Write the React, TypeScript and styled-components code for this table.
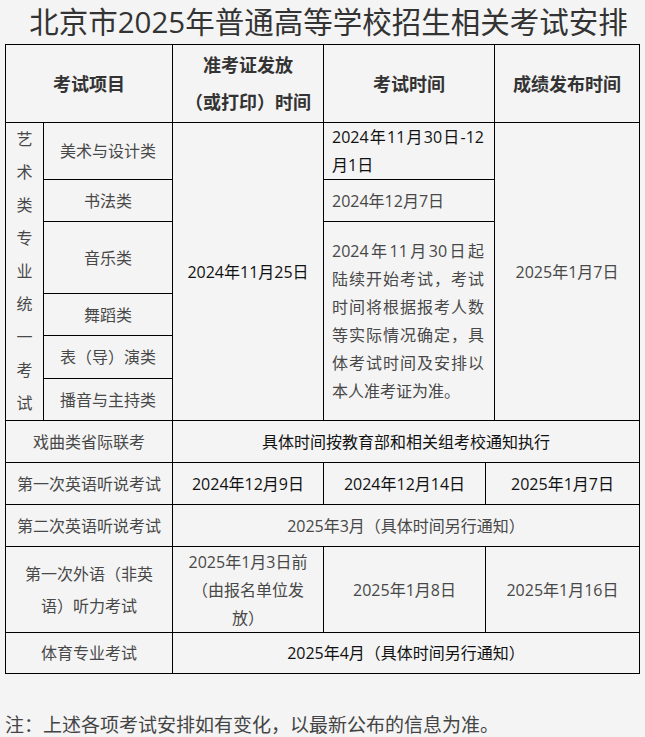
import styled, { createGlobalStyle } from "styled-components";

const GlobalStyle = createGlobalStyle`
  html, body {
    margin: 0;
    padding: 0;
    background: #f4f4f4;
  }
  body {
    font-family: "Open Sans", "Noto Sans CJK SC", sans-serif;
    color: #444;
  }
`;

const Page = styled.div`
  width: 645px;
  padding: 0 5px;
  box-sizing: border-box;
`;

const Title = styled.h1`
  margin: 0;
  height: 44px;
  line-height: 44px;
  font-size: 29.5px;
  font-weight: 400;
  color: #333;
  text-align: center;
  padding-left: 12px;
  white-space: nowrap;
`;

const Grid = styled.div`
  display: grid;
  grid-template-columns: 37px 128px 150px 161px 8px 144px;
  grid-template-rows: 77px 56px 41px 71px 41px 42px 41px 41px 41px 41px 85px 40px;
  gap: 1px;
  width: max-content;
  background: #000;
  border: 1px solid #000;
`;

type Tone = "head" | "dark" | "mid";

const toneColor: Record<Tone, string> = {
  head: "#333",
  dark: "#111",
  mid: "#484848",
};

const Cell = styled.div<{
  $span?: number;
  $rows?: number;
  $tone?: Tone;
  $justify?: boolean;
  $lh?: number;
  $pl?: number;
  $pr?: number;
}>`
  grid-column: span ${(p) => p.$span ?? 1};
  grid-row: span ${(p) => p.$rows ?? 1};
  display: flex;
  flex-direction: column;
  justify-content: center;
  background: #f4f4f4;
  padding: 0 ${(p) => p.$pr ?? 5}px 0 ${(p) => p.$pl ?? 5}px;
  font-size: ${(p) => (p.$tone === "head" ? 18 : 16)}px;
  font-weight: ${(p) => (p.$tone === "head" ? 700 : 400)};
  line-height: ${(p) => p.$lh ?? 28}px;
  color: ${(p) => toneColor[p.$tone ?? "mid"]};
  text-align: ${(p) => (p.$justify ? "justify" : "center")};
  overflow: hidden;
`;

const Note = styled.p`
  margin: 37px 0 0;
  font-size: 19px;
  line-height: 28px;
  color: #444;
  white-space: nowrap;
`;

const artItems = ["书法类", "音乐类", "舞蹈类", "表（导）演类", "播音与主持类"];

export default function App() {
  return (
    <Page>
      <GlobalStyle />
      <Title>北京市2025年普通高等学校招生相关考试安排</Title>
      <Grid>
        <Cell $span={2} $tone="head">考试项目</Cell>
        <Cell $tone="head" $lh={37}>
          准考证发放
          <br />
          （或打印）时间
        </Cell>
        <Cell $span={2} $tone="head">考试时间</Cell>
        <Cell $tone="head">成绩发布时间</Cell>

        <Cell $rows={6} $lh={33}>艺术类专业统一考试</Cell>
        <Cell>美术与设计类</Cell>
        <Cell $rows={6} $tone="dark">2024年11月25日</Cell>
        <Cell $span={2} $tone="dark" $justify $pl={8} $pr={10}>
          2024年11月30日-12月1日
        </Cell>
        <Cell $rows={6}>2025年1月7日</Cell>

        <Cell>{artItems[0]}</Cell>
        <Cell $span={2} $justify $pl={8} $pr={10}>2024年12月7日</Cell>

        <Cell>{artItems[1]}</Cell>
        <Cell $span={2} $rows={4} $justify $pl={8} $pr={10}>
          2024年11月30日起陆续开始考试，考试时间将根据报考人数等实际情况确定，具体考试时间及安排以本人准考证为准。
        </Cell>
        <Cell>{artItems[2]}</Cell>
        <Cell>{artItems[3]}</Cell>
        <Cell>{artItems[4]}</Cell>

        <Cell $span={2}>戏曲类省际联考</Cell>
        <Cell $span={4} $tone="dark">具体时间按教育部和相关组考校通知执行</Cell>

        <Cell $span={2}>第一次英语听说考试</Cell>
        <Cell $tone="dark">2024年12月9日</Cell>
        <Cell $tone="dark">2024年12月14日</Cell>
        <Cell $span={2} $tone="dark">2025年1月7日</Cell>

        <Cell $span={2}>第二次英语听说考试</Cell>
        <Cell $span={4}>2025年3月（具体时间另行通知）</Cell>

        <Cell $span={2} $lh={32} $pl={8} $pr={8}>第一次外语（非英语）听力考试</Cell>
        <Cell $pl={8} $pr={8}>2025年1月3日前（由报名单位发放）</Cell>
        <Cell>2025年1月8日</Cell>
        <Cell $span={2}>2025年1月16日</Cell>

        <Cell $span={2}>体育专业考试</Cell>
        <Cell $span={4} $tone="dark">2025年4月（具体时间另行通知）</Cell>
      </Grid>
      <Note>注：上述各项考试安排如有变化，以最新公布的信息为准。</Note>
    </Page>
  );
}
